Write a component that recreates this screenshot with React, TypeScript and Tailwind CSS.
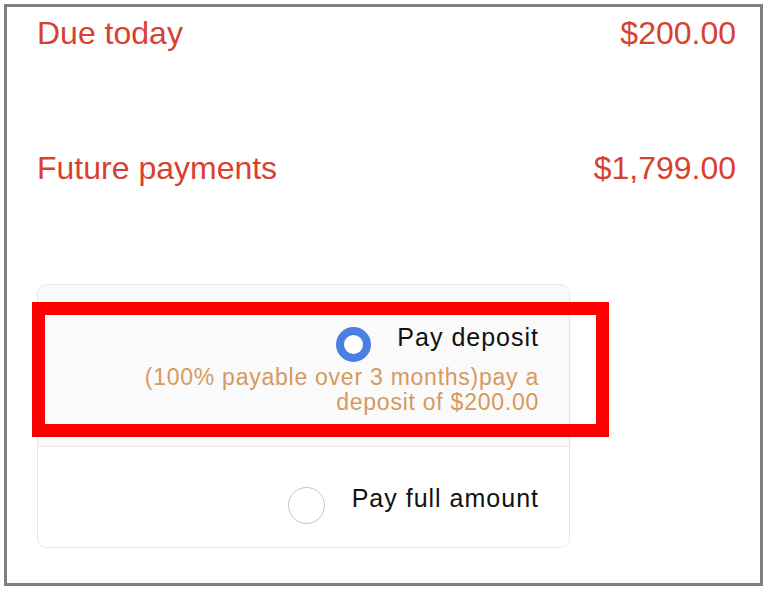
import React from "react";

export default function App() {
  return (
    <div className="relative w-[768px] h-[591px] bg-white overflow-hidden" style={{ fontFamily: '"Liberation Sans", Arial, sans-serif' }}>
      <div className="ml-[4px] mt-[4px] w-[759px] h-[582px] border-[3px] border-[#7e7e84] pt-[7px]">
        <div className="flex justify-between pl-[30px] pr-[24px] text-[32px] leading-[38px] text-[#d8412f]">
          <span>Due today</span>
          <span>$200.00</span>
        </div>
        <div className="mt-[97px] flex justify-between pl-[30px] pr-[24px] text-[32px] leading-[38px] text-[#d8412f]">
          <span>Future payments</span>
          <span>$1,799.00</span>
        </div>
        <div className="mt-[97px] ml-[30px] w-[533px] rounded-[10px] border border-[#e6e6e6] overflow-hidden">
          <div className="bg-[#fafafa] pt-[42px] pb-[31px] pr-[30px] flex flex-col items-end">
            <div className="flex items-start gap-[26px] h-[36px]">
              <span className="w-[35px] h-[35px] rounded-full border-[8px] border-[#4a7fe4] bg-white"></span>
              <span className="-mt-[5px] text-[25px] leading-[30px] tracking-[1px] text-[#111]">Pay deposit</span>
            </div>
            <div className="mt-[2px] text-right text-[23px] leading-[25px] tracking-[0.75px] text-[#d6995f]">
              (100% payable over 3 months)pay a<br />deposit of $200.00
            </div>
          </div>
          <div className="border-t border-[#e6e6e6] bg-white pt-[40px] pb-[23px] pr-[30px] flex justify-end">
            <div className="flex items-start gap-[27px] h-[37px]">
              <span className="w-[37px] h-[37px] rounded-full border-[1.5px] border-[#c4c4c4] bg-white"></span>
              <span className="-mt-[4px] text-[25px] leading-[30px] tracking-[1px] text-[#111]">Pay full amount</span>
            </div>
          </div>
        </div>
      </div>
      <div className="absolute left-[32px] top-[302px] w-[577px] h-[135px] border-[13px] border-[#ff0000] pointer-events-none"></div>
    </div>
  );
}
